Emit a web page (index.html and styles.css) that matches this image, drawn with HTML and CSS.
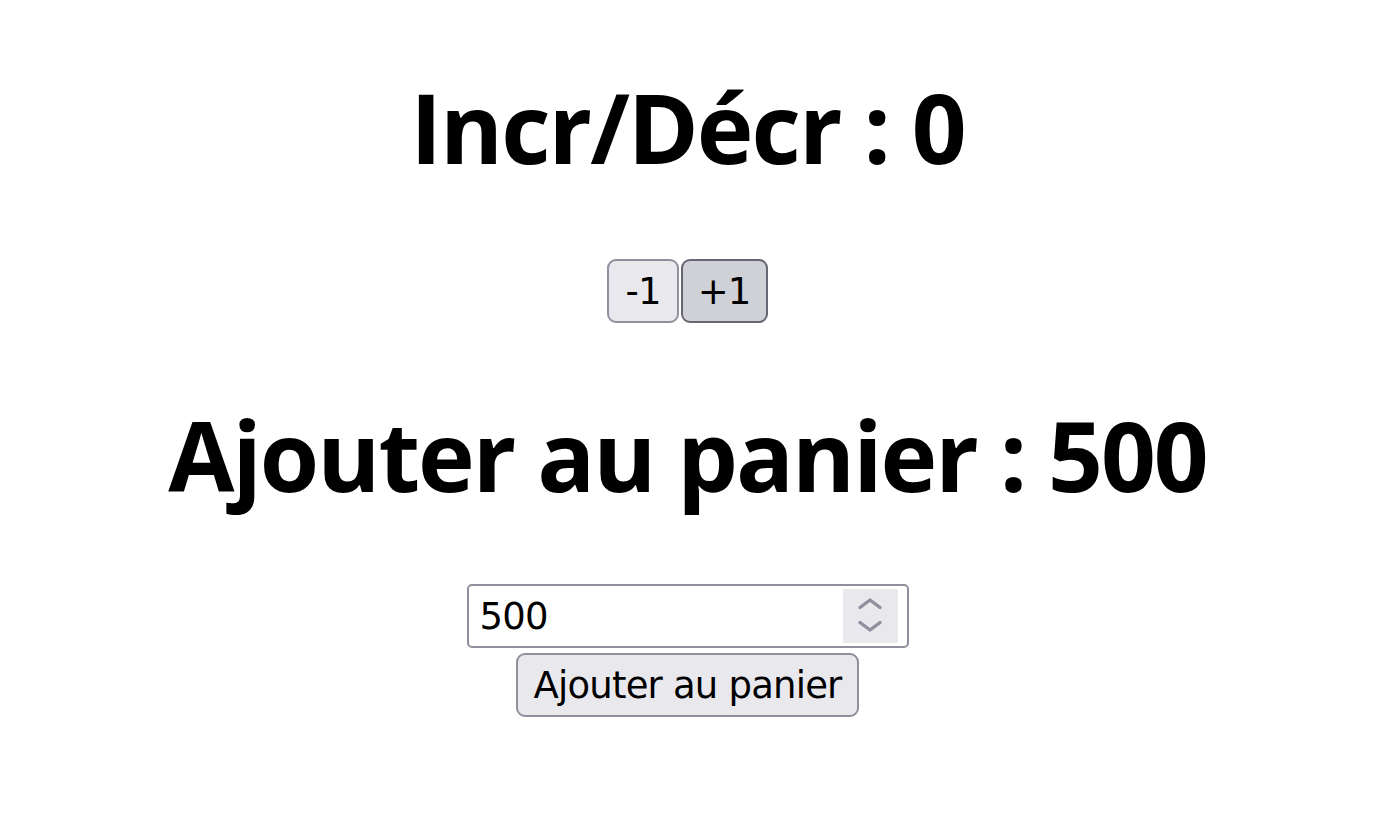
FILE: index.html
```html
<!DOCTYPE html>
<html lang="fr">
<head>
<meta charset="utf-8">
<title>Compteur</title>
<link rel="stylesheet" href="styles.css">
</head>
<body>
<main class="page">
  <h1 class="title">Incr/Décr : 0</h1>
  <div class="counter"><button class="btn">-1</button><button class="btn btn-hover">+1</button></div>
  <h1 class="title title-cart">Ajouter au panier : 500</h1>
  <div class="cart">
    <div class="number-field">
      <span class="number-value">500</span>
      <span class="spinner">
        <svg width="55" height="54" viewBox="0 0 55 54" aria-hidden="true">
          <path d="M17 18.5 L27 11 L37 18.5" fill="none" stroke="#8f8f9d" stroke-width="3.4" stroke-linecap="round" stroke-linejoin="round"/>
          <path d="M17 33.5 L27 41 L37 33.5" fill="none" stroke="#8f8f9d" stroke-width="3.4" stroke-linecap="round" stroke-linejoin="round"/>
        </svg>
      </span>
    </div>
    <button class="btn btn-add">Ajouter au panier</button>
  </div>
</main>
</body>
</html>
```
FILE: styles.css
```css
html, body {
  margin: 0;
  padding: 0;
  background: #ffffff;
}

.page {
  display: flex;
  flex-direction: column;
  align-items: center;
  color: #000;
}

.title {
  margin: 64px 0 0;
  font-family: "Open Sans", "Noto Sans", sans-serif;
  font-weight: 700;
  font-size: 96px;
  letter-spacing: -2px;
  line-height: 126px;
  height: 126px;
  white-space: nowrap;
}

.counter {
  display: flex;
  margin-top: 69px;
}

.btn {
  font-family: "DejaVu Sans", sans-serif;
  font-size: 37px;
  letter-spacing: -0.8px;
  color: #000;
  background: #e9e9ed;
  border: 2px solid #8f8f9d;
  border-radius: 9px;
  height: 64px;
  padding: 0 16px;
  margin: 0;
  line-height: 1;
  cursor: pointer;
}

.btn + .btn {
  margin-left: 2px;
}

.btn-hover {
  background: #d0d0d7;
  border-color: #676774;
  padding: 0 15px;
}

.title-cart {
  margin-top: 69px;
}

.cart {
  display: flex;
  flex-direction: column;
  align-items: center;
  gap: 5px;
  margin-top: 66px;
}

.number-field {
  box-sizing: border-box;
  width: 442px;
  height: 64px;
  border: 2px solid #8f8f9d;
  border-radius: 5px;
  display: flex;
  align-items: center;
  justify-content: space-between;
  padding: 0 9px 0 11px;
  background: #fff;
}

.number-value {
  font-family: "DejaVu Sans", sans-serif;
  font-size: 37px;
  letter-spacing: -0.8px;
}

.spinner {
  width: 55px;
  height: 54px;
  background: #e9e9ed;
  display: flex;
}

.btn-add {
  padding: 0 15px;
}
```
